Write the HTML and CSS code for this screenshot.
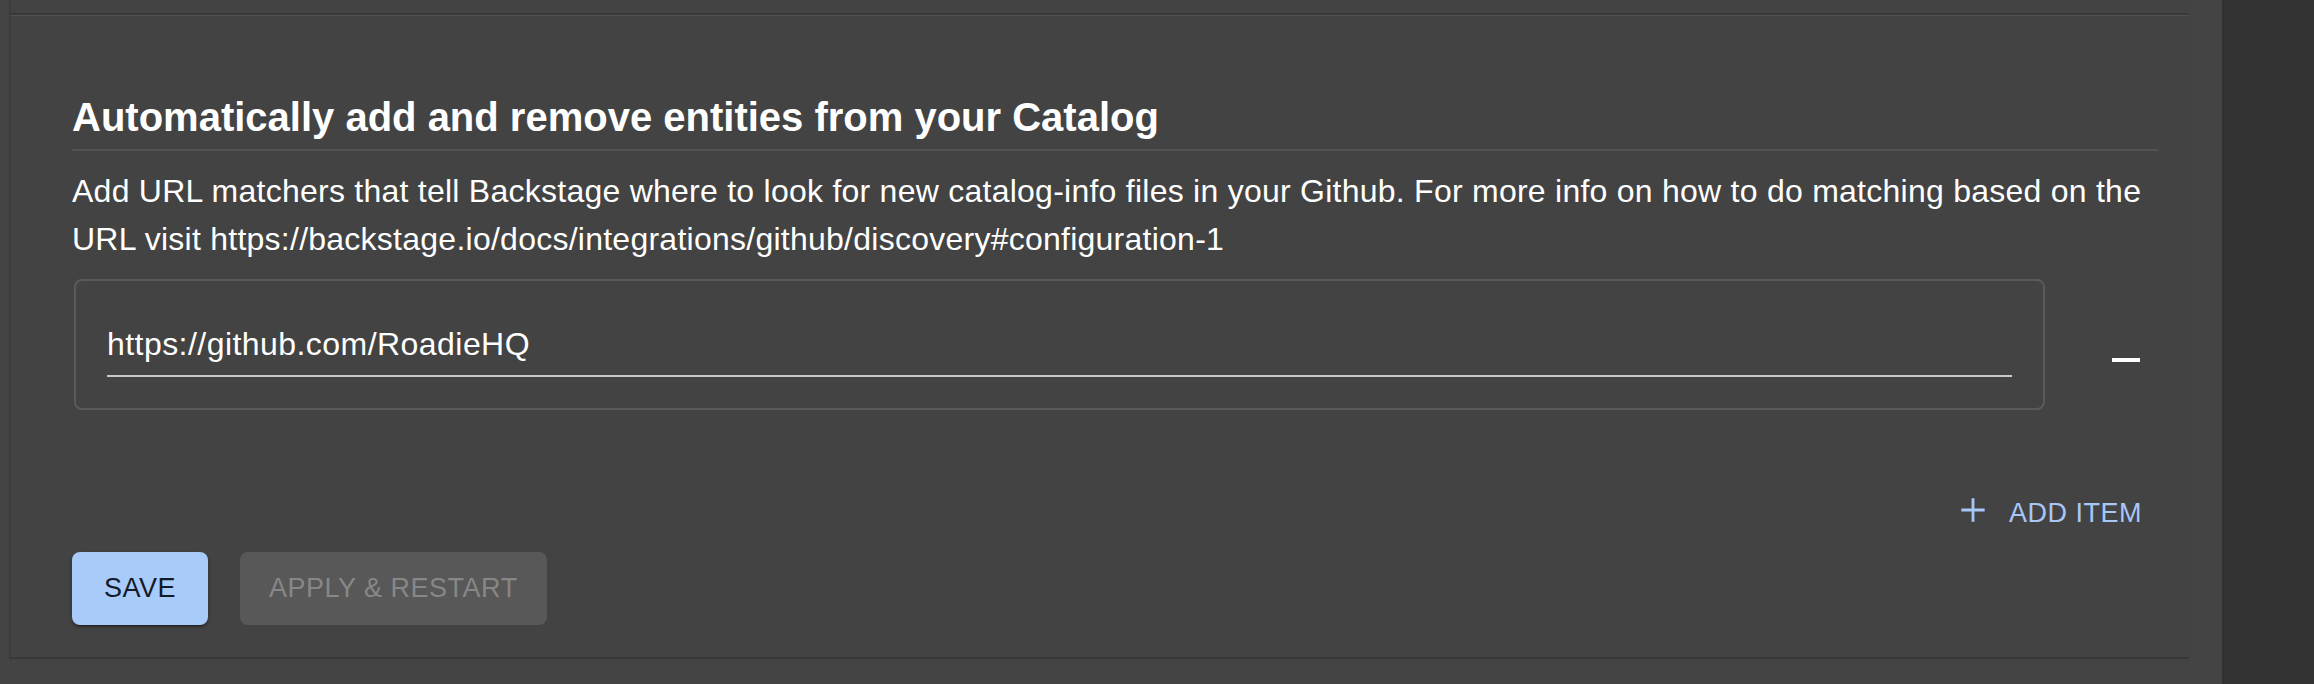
FILE: index.html
```html
<!DOCTYPE html>
<html lang="en">
<head>
<meta charset="utf-8">
<title>Catalog discovery</title>
<link rel="stylesheet" href="styles.css">
</head>
<body>
<div class="layout">
  <main class="main">
    <div class="prev-card"></div>
    <section class="card">
      <h2 class="title">Automatically add and remove entities from your Catalog</h2>
      <p class="desc">Add URL matchers that tell Backstage where to look for new catalog-info files in your Github. For more info on how to do matching based on the URL visit https://backstage.io/docs/integrations/github/discovery#configuration-1</p>
      <div class="item-row">
        <div class="outlined">
          <div class="field"><span class="value">https://github.com/RoadieHQ</span></div>
        </div>
        <button class="icon-btn" type="button" aria-label="remove">
          <svg viewBox="0 0 24 24" width="48" height="48"><path d="M19 13H5v-2h14v2z" fill="#ffffff"/></svg>
        </button>
      </div>
      <div class="add-row">
        <button class="text-btn" type="button">
          <svg class="start-icon" viewBox="0 0 24 24" width="40" height="40"><path d="M19 12.85h-6.15V19h-1.7v-6.15H5v-1.7h6.15V5h1.7v6.15H19v1.7z" fill="currentColor"/></svg>
          <span>ADD ITEM</span>
        </button>
      </div>
      <div class="actions">
        <button class="btn primary" type="button">SAVE</button>
        <button class="btn disabled" type="button">APPLY &amp; RESTART</button>
      </div>
    </section>
  </main>
  <aside class="sidebar"></aside>
</div>
</body>
</html>
```
FILE: styles.css
```css
html, body {
  margin: 0;
  padding: 0;
}
body {
  background: #444444;
  font-family: "Liberation Sans", Arial, Helvetica, sans-serif;
  color: #ffffff;
  height: 684px;
  overflow: hidden;
}
.layout {
  display: flex;
  height: 684px;
}
.main {
  flex: 1;
  padding: 0 33px 0 9px;
}
.sidebar {
  width: 92px;
  background: #323232;
}
.prev-card {
  height: 13px;
  background: #434343;
  border-left: 2px solid #3b3b3b;
  border-bottom: 2px solid #393939;
}
.card {
  background: #434343;
  border-left: 2px solid #3b3b3b;
  border-top: 1px solid #515151;
  border-bottom: 2px solid #383838;
  padding: 70px 31px 32px 61px;
}
.title {
  margin: 0;
  font-size: 40px;
  font-weight: 700;
  line-height: 63px;
  border-bottom: 2px solid #535353;
  color: #ffffff;
}
.desc {
  margin: 16px 0 0;
  font-size: 32px;
  line-height: 48px;
  letter-spacing: 0.25px;
  color: #ffffff;
}
.item-row {
  display: flex;
  margin-top: 16px;
}
.outlined {
  flex: 1;
  margin-left: 2px;
  border: 2px solid #5a5a5a;
  border-radius: 8px;
  padding: 39px 31px 31px;
}
.field {
  border-bottom: 2px solid #c9c9c9;
  padding-bottom: 7px;
}
.value {
  display: block;
  font-size: 32px;
  line-height: 48px;
  letter-spacing: 0.45px;
  color: #ffffff;
}
.icon-btn {
  width: 48px;
  height: 48px;
  padding: 0;
  margin: 57px 8px 0 57px;
  border: none;
  background: none;
  display: flex;
}
.add-row {
  display: flex;
  justify-content: flex-end;
  margin-top: 67px;
}
.text-btn {
  display: inline-flex;
  align-items: center;
  padding: 12px 16px;
  border: none;
  background: none;
  font-family: inherit;
  font-size: 27px;
  line-height: 48px;
  letter-spacing: 0.5px;
  color: #a7c7f7;
}
.start-icon {
  margin: -6px 16px 0 -8px;
}
.actions {
  display: flex;
  gap: 32px;
  margin-top: 3px;
}
.btn {
  font-family: inherit;
  font-size: 27px;
  line-height: 49px;
  letter-spacing: 0.5px;
  padding: 12px 29px;
  border: none;
  border-radius: 8px;
}
.primary {
  padding: 12px 32px;
  background: #a9cbfa;
  color: #131b29;
  box-shadow: 0 3px 2px -2px rgba(0, 0, 0, 0.35), 0 2px 4px rgba(0, 0, 0, 0.3);
}
.disabled {
  background: #585858;
  color: #878787;
}
```
